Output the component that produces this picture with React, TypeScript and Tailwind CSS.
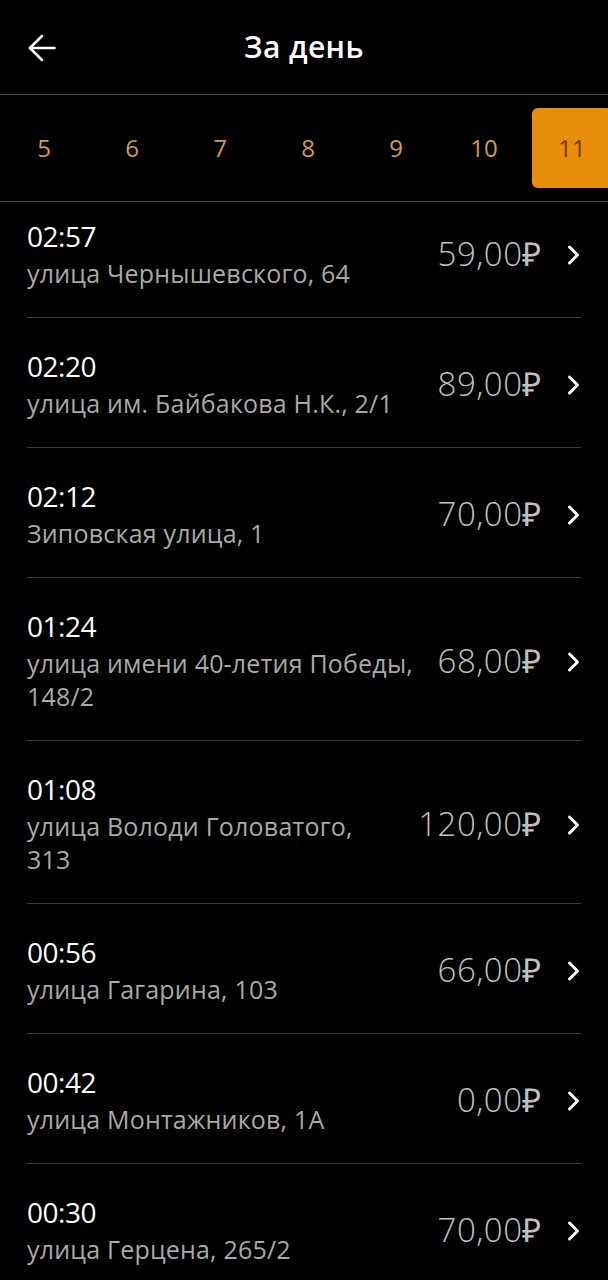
import React from "react";

type Ride = {
  time: string;
  address: string;
  price: string;
};

const rides: Ride[] = [
  { time: "02:57", address: "улица Чернышевского, 64", price: "59,00₽" },
  { time: "02:20", address: "улица им. Байбакова Н.К., 2/1", price: "89,00₽" },
  { time: "02:12", address: "Зиповская улица, 1", price: "70,00₽" },
  { time: "01:24", address: "улица имени 40-летия Победы, 148/2", price: "68,00₽" },
  { time: "01:08", address: "улица Володи Головатого, 313", price: "120,00₽" },
  { time: "00:56", address: "улица Гагарина, 103", price: "66,00₽" },
  { time: "00:42", address: "улица Монтажников, 1А", price: "0,00₽" },
  { time: "00:30", address: "улица Герцена, 265/2", price: "70,00₽" },
];

const days = [5, 6, 7, 8, 9, 10, 11];

function BackArrow() {
  return (
    <svg width="28" height="28" viewBox="0 0 28 28" fill="none" stroke="white" strokeWidth="2.6" strokeLinecap="round" strokeLinejoin="round">
      <path d="M26.5 14H2" />
      <path d="M14 2L2 14l12 12" />
    </svg>
  );
}

function Chevron() {
  return (
    <svg width="13" height="22" viewBox="0 0 13 22" fill="none" stroke="white" strokeWidth="3" strokeLinecap="round" strokeLinejoin="round">
      <path d="M2.5 3l8 8-8 8" />
    </svg>
  );
}

export default function App() {
  return (
    <div className="min-h-[1280px] w-[608px] overflow-hidden bg-black font-['Open_Sans',sans-serif] text-white">
      {/* Header */}
      <header className="grid h-[95px] grid-cols-[1fr_auto_1fr] items-center border-b border-[#4a4a4a]">
        <div className="pl-[28px] pt-[2px]">
          <BackArrow />
        </div>
        <h1 className="text-[30px] font-semibold leading-none tracking-[0.4px]">За день</h1>
        <div />
      </header>

      {/* Days */}
      <div className="flex h-[107px] items-center overflow-hidden border-b border-[#4a4a4a]">
        {days.map((d) => (
          <div key={d} className="flex w-[88px] shrink-0 items-center justify-center">
            {d === 11 ? (
              <div className="flex h-[80px] w-[80px] items-center justify-center rounded-[6px] bg-[#e88e0c] text-[24px] text-[#6b3c02]">
                {d}
              </div>
            ) : (
              <span className="text-[24px] text-[#d6994f]">{d}</span>
            )}
          </div>
        ))}
      </div>

      {/* Rides */}
      <div className="px-[27px]">
        {rides.map((r, i) => (
          <div
            key={r.time}
            className={`flex items-center border-b border-[#3d3d3d] pb-[27px] pr-[1px] ${i === 0 ? "pt-[16px]" : "pt-[30px]"}`}
          >
            <div className="min-w-0 flex-1 pr-[20px]">
              <div className="text-[28px] leading-[36px] tracking-[-0.5px] text-white">{r.time}</div>
              <div className="mt-[3px] text-[25px] leading-[33px] tracking-[0.2px] text-[#a9a9a9]">{r.address}</div>
            </div>
            <div className="shrink-0 text-[33px] font-light tracking-[0.5px] text-[#c0c0c0]">{r.price}</div>
            <div className="ml-[25px] shrink-0 pt-[2px]">
              <Chevron />
            </div>
          </div>
        ))}
      </div>
    </div>
  );
}
